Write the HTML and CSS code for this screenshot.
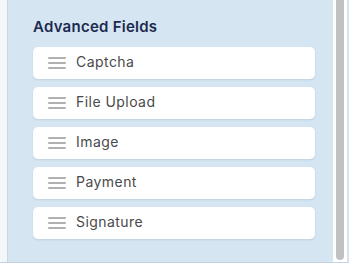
FILE: index.html
```html
<!DOCTYPE html>
<html>
<head>
<meta charset="utf-8">
<link rel="stylesheet" href="styles.css">
</head>
<body>
<div class="frame">
  <div class="gutter"></div>
  <div class="panel">
    <h2 class="title">Advanced Fields</h2>
    <ul class="fields">
      <li class="field"><span class="grip"><i></i><i></i><i></i></span><span class="label">Captcha</span></li>
      <li class="field"><span class="grip"><i></i><i></i><i></i></span><span class="label">File Upload</span></li>
      <li class="field"><span class="grip"><i></i><i></i><i></i></span><span class="label">Image</span></li>
      <li class="field"><span class="grip"><i></i><i></i><i></i></span><span class="label">Payment</span></li>
      <li class="field"><span class="grip"><i></i><i></i><i></i></span><span class="label">Signature</span></li>
    </ul>
  </div>
  <div class="scroll"><div class="thumb"></div></div>
</div>
</body>
</html>
```
FILE: styles.css
```css
html, body {
  margin: 0;
  padding: 0;
  background: #ffffff;
}
body {
  font-family: "Inter", "Noto Sans", sans-serif;
  width: 349px;
  height: 265px;
  overflow: hidden;
}
.frame {
  display: flex;
  height: 262px;
  border-bottom: 1px solid #c3d3e2;
}
.gutter {
  width: 7px;
  background: #f3f7fa;
  border-right: 1px solid #c9d8e5;
}
.panel {
  flex: 1;
  background: #d6e5f2;
  padding: 16px 18px 0 25px;
}
.title {
  margin: 0 0 10px 0;
  font-size: 15px;
  line-height: 21px;
  font-weight: 600;
  color: #1b2a4e;
  letter-spacing: 0.25px;
}
.fields {
  list-style: none;
  margin: 0;
  padding: 0;
  display: flex;
  flex-direction: column;
  gap: 8px;
}
.field {
  height: 32px;
  background: #ffffff;
  border-radius: 5px;
  box-shadow: 0 1px 2px rgba(80, 110, 140, 0.18);
  display: flex;
  align-items: center;
  padding-left: 15px;
}
.grip {
  width: 18px;
  display: flex;
  flex-direction: column;
  gap: 2.5px;
  margin-right: 10px;
}
.grip i {
  display: block;
  height: 2.5px;
  background: #b0b0b0;
  border-radius: 1px;
}
.label {
  font-size: 14px;
  line-height: 18px;
  padding-bottom: 2px;
  color: #4a4a4a;
  letter-spacing: 0.45px;
}
.scroll {
  background: #ffffff;
  border-right: 2px solid #d6e3ef;
  padding: 0 2px 2px 3px;
  box-sizing: border-box;
  width: 16px;
  display: flex;
}
.thumb {
  width: 8px;
  flex: none;
  background: #c1c1c1;
  border-radius: 0 0 4px 4px;
}
```
